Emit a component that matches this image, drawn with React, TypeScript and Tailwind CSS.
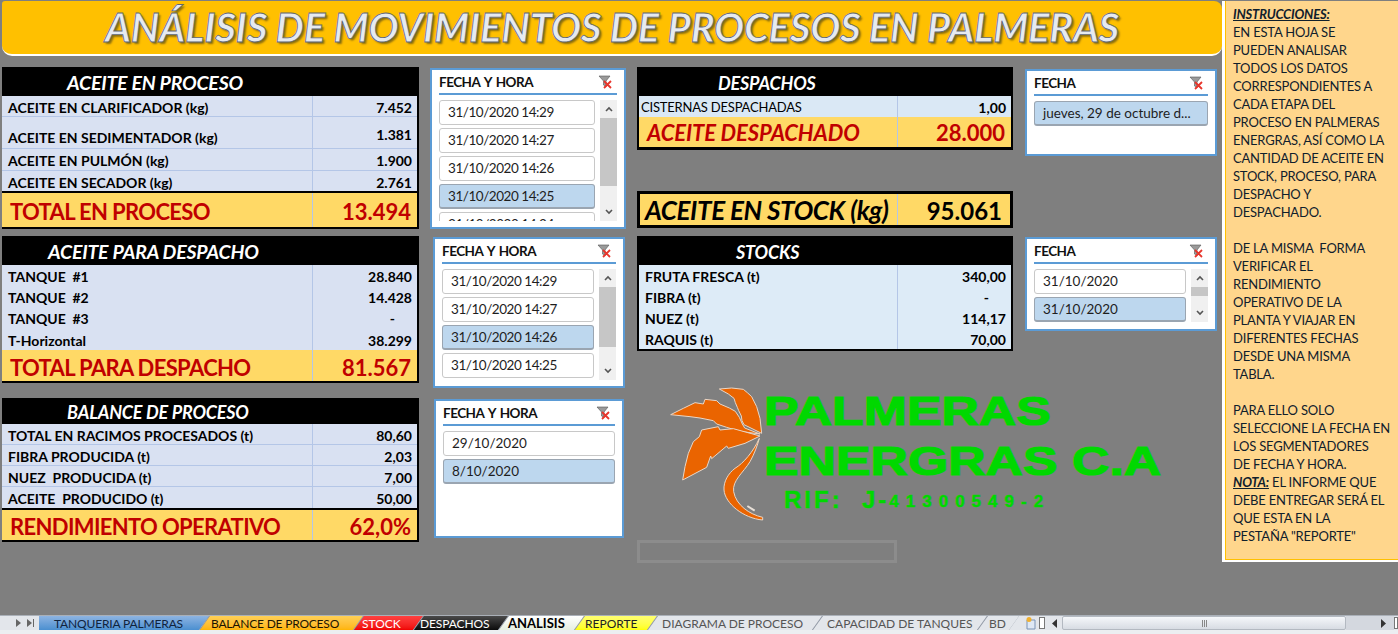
import type { ReactNode } from 'react';

const FONT = "font-['Lato','Liberation_Sans',sans-serif]";

type Row = { label: string; value: string; h: string; line?: boolean };

const proceso: Row[] = [
    { label: 'ACEITE EN CLARIFICADOR (kg)', value: '7.452', h: 'h-[21px]', line: true },
    { label: 'ACEITE EN SEDIMENTADOR (kg)', value: '1.381', h: 'h-[32px] items-end', line: true },
    { label: 'ACEITE EN PULMÓN (kg)', value: '1.900', h: 'h-[22px]', line: true },
    { label: 'ACEITE EN SECADOR (kg)', value: '2.761', h: 'h-[20px]' },
];
const despacho: Row[] = [
    { label: 'TANQUE  #1', value: '28.840', h: 'h-[21px]' },
    { label: 'TANQUE  #2', value: '14.428', h: 'h-[21px]' },
    { label: 'TANQUE  #3', value: '-     ', h: 'h-[21px]' },
    { label: 'T-Horizontal', value: '38.299', h: 'h-[22px]' },
];
const balance: Row[] = [
    { label: 'TOTAL EN RACIMOS PROCESADOS (t)', value: '80,60', h: 'h-[21px]', line: true },
    { label: 'FIBRA PRODUCIDA (t)', value: '2,03', h: 'h-[21px]', line: true },
    { label: 'NUEZ  PRODUCIDA (t)', value: '7,00', h: 'h-[21px]', line: true },
    { label: 'ACEITE  PRODUCIDO (t)', value: '50,00', h: 'h-[21px]' },
];
const stocks: Row[] = [
    { label: 'FRUTA FRESCA (t)', value: '340,00', h: 'h-[21px]' },
    { label: 'FIBRA (t)', value: '-     ', h: 'h-[21px]' },
    { label: 'NUEZ (t)', value: '114,17', h: 'h-[21px]' },
    { label: 'RAQUIS (t)', value: '70,00', h: 'h-[21px]' },
];

function DataRow({ row, divider, fill }: { row: Row; divider: string; fill: string }) {
    const tall = row.h.includes('items-end');
    return (
        <div className={`flex ${row.h} ${fill} ${row.line ? 'border-b border-[#b4c6e7]' : ''}`}>
            <div className={`flex-1 flex items-center pl-[6px] text-[14px] font-bold text-black whitespace-pre ${tall ? 'self-end h-[22px]' : 'pt-[2px]'}`}>
                {row.label}
            </div>
            <div className={`${divider} self-stretch border-l border-[#b4c6e7] flex ${tall ? 'items-end pb-[3px]' : 'items-center pt-[2px]'} justify-end pr-[5px] text-[14px] font-bold text-black whitespace-pre`}>
                {row.value}
            </div>
        </div>
    );
}

function TotalRow({ label, value, h, italic }: { label: string; value: string; h: string; italic?: boolean }) {
    return (
        <div className={`flex ${h} bg-[#ffd966]`}>
            <div className={`flex-1 flex items-center font-bold text-[#c00000] whitespace-nowrap ${italic ? 'pl-[8px] pt-px italic text-[22px] tracking-[-0.1px]' : 'pl-[8px] pt-[3px] text-[22px] tracking-[-0.65px]'}`}>
                {label}
            </div>
            <div className={`${italic ? 'w-[114px] pt-px' : 'w-[105px] pt-[3px]'} border-l border-[#b4c6e7] flex items-center justify-end pr-[6px] text-[22px] font-bold text-[#c00000]`}>
                {value}
            </div>
        </div>
    );
}

function Header({ title, h, pad, size }: { title: string; h: string; pad: string; size: string }) {
    return (
        <div className={`${h} ${pad} ${size} bg-black flex items-center font-bold italic text-white tracking-[-0.2px]`}>
            {title}
        </div>
    );
}

function ClearFilter() {
    return (
        <svg width="16" height="15" viewBox="0 0 16 15" className="shrink-0 mr-[3px]">
            <path d="M1 1h11L8 6v6L5.5 10V6z" fill="#9a9a9a" stroke="#555" strokeWidth="0.6" />
            <path d="M6 6l7 7M13 6l-7 7" stroke="#e8352b" strokeWidth="1.8" />
        </svg>
    );
}

function Scrollbar({ track, thumb }: { track: string; thumb: string }) {
    return (
        <div className={`w-[17px] ${track} bg-[#f0f0f0] flex flex-col items-center shrink-0 overflow-hidden`}>
            <svg width="10" height="18" viewBox="0 0 10 18" className="shrink-0">
                <path d="M2 11l3-3 3 3" fill="none" stroke="#555" strokeWidth="1.6" />
            </svg>
            <div className={`w-full ${thumb} bg-[#c6c6c6] shrink-0`} />
            <div className="flex-1" />
            <svg width="10" height="18" viewBox="0 0 10 18" className="shrink-0">
                <path d="M2 7l3 3 3-3" fill="none" stroke="#555" strokeWidth="1.6" />
            </svg>
        </div>
    );
}

function Item({ text, selected, tight }: { text: string; selected?: boolean; tight?: boolean }) {
    return (
        <div
            className={`h-[25px] shrink-0 rounded-[3px] flex items-center pl-[8px] text-[13.5px] text-[#1e1e1e] whitespace-nowrap overflow-hidden ${
                tight ? 'tracking-[-0.45px]' : ''
            } ${selected ? 'bg-[#bdd7ee] border border-[#9aa5b1] border-b-2' : 'bg-white border border-[#c8c8c8]'}`}
        >
            {text}
        </div>
    );
}

function Slicer({ title, box, inner, children }: { title: string; box: string; inner: string; children: ReactNode }) {
    return (
        <div className={`${box} bg-white border-2 border-[#5b9bd5] shrink-0 flex flex-col overflow-hidden`}>
            <div className={`${inner} h-[24px] mt-px flex items-center justify-between border-b-2 border-[#5b9bd5] shrink-0`}>
                <span className="text-[13.5px] font-bold text-[#111] tracking-[-0.5px] [word-spacing:1.5px]">{title}</span>
                <ClearFilter />
            </div>
            {children}
        </div>
    );
}

const tabs = [
    { label: 'TANQUERIA PALMERAS', w: 'w-[170px]', bg: 'bg-gradient-to-b from-[#8db4e2] to-[#4a8fd0]', text: 'text-[#10243e] text-[12px] tracking-[-0.15px]', pad: 'pl-[15px]' },
    { label: 'BALANCE DE PROCESO', w: 'w-[164px]', bg: 'bg-gradient-to-b from-[#ffd055] to-[#ffb400]', text: 'text-[#1c1400] text-[12px] tracking-[-0.2px]', pad: 'pl-[11px]' },
    { label: 'STOCK', w: 'w-[70px]', bg: 'bg-gradient-to-b from-[#ff4040] to-[#f00000]', text: 'text-white text-[12px]', pad: 'pl-[8px]' },
    { label: 'DESPACHOS', w: 'w-[95px]', bg: 'bg-gradient-to-b from-[#4a4a4a] to-[#0c0c0c]', text: 'text-white text-[12px] tracking-[-0.1px]', pad: 'pl-[6px]' },
    { label: 'ANALISIS', w: 'w-[86px]', bg: 'bg-gradient-to-b from-white to-[#e6f0e0]', text: 'text-black font-bold text-[13px]', pad: 'pl-[9px]' },
    { label: 'REPORTE', w: 'w-[83px]', bg: 'bg-gradient-to-b from-[#ffff70] to-[#ffff00]', text: 'text-[#222] text-[12px]', pad: 'pl-[10px]' },
    { label: 'DIAGRAMA DE PROCESO', w: 'w-[175px]', bg: 'bg-[#e3e6eb]', text: 'text-[#555] text-[12px]', pad: 'pl-[14px]' },
    { label: 'CAPACIDAD DE TANQUES', w: 'w-[175px]', bg: 'bg-[#e3e6eb]', text: 'text-[#555] text-[12px]', pad: 'pl-[14px]' },
    { label: 'BD', w: 'w-[42px]', bg: 'bg-[#e3e6eb]', text: 'text-[#555] text-[12px]', pad: 'pl-[11px]' },
];

function PalmLogo() {
    return (
        <svg width="104" height="144" viewBox="0 0 312 432" className="shrink-0">
            <g fill="#ea6400" stroke="#e9d6c6" strokeWidth="3" strokeLinejoin="round">
                <path d="M178 27L215 24L250 28L262 38L275 50L290 80L300 115L305 160L252 134L246 122L244 108L236 92L232 82L226 68L222 55L205 42Z" />
                <path d="M32 104L70 85L105 68L130 72L135 58L170 62L180 72L208 84L226 94L238 112L247 132L254 144L300 162L240 154L200 142L170 132L160 122L120 114L90 110Z" />
                <path d="M68 300L75 260L85 220L100 185L118 170L125 150L175 140L180 150L220 146L300 168L255 190L205 205L200 198L155 236L152 228L140 262Z" />
                <path d="M298 175C280 215 250 250 225 265C205 280 190 305 192 330C195 370 250 415 308 420V412C268 403 228 375 221 335C216 302 250 278 270 245C283 222 292 197 298 175Z" />
            </g>
            <path d="M262 378L284 392" stroke="#e8e0d8" strokeWidth="6" />
        </svg>
    );
}

function Logo() {
    const big = "font-['Liberation_Sans',sans-serif] font-bold text-[#00d800] [-webkit-text-stroke:1.2px_#00d800] origin-left scale-x-[1.295] whitespace-pre";
    return (
        <div className="flex ml-[23px] mt-[29px] h-[144px]">
            <PalmLogo />
            <div className="flex flex-col pt-[8px]">
                <div className={`${big} text-[40px] leading-[46px]`}>PALMERAS</div>
                <div className={`${big} text-[40px] leading-[46px] mt-[4px]`}>ENERGRAS C.A</div>
                <div className="mt-[2px] ml-[20px] h-[28px] flex items-end font-['Liberation_Sans',sans-serif] font-bold text-[#00d800] whitespace-pre [-webkit-text-stroke:0.5px_#00d800]">
                    <span className="text-[24px] leading-[28px] tracking-[3px]">RIF:  J-</span>
                    <span className="text-[17px] leading-[24px] tracking-[7px]">41300549-2</span>
                </div>
            </div>
        </div>
    );
}

function Instructions() {
    const lines = [
        'EN ESTA HOJA SE', 'PUEDEN ANALISAR', 'TODOS LOS DATOS', 'CORRESPONDIENTES A', 'CADA ETAPA DEL', 'PROCESO EN PALMERAS',
        'ENERGRAS, ASÍ COMO LA', 'CANTIDAD DE ACEITE EN', 'STOCK, PROCESO, PARA', 'DESPACHO Y', 'DESPACHADO.', '\u00a0',
        'DE LA MISMA  FORMA', 'VERIFICAR EL', 'RENDIMIENTO', 'OPERATIVO DE LA', 'PLANTA Y VIAJAR EN', 'DIFERENTES FECHAS',
        'DESDE UNA MISMA', 'TABLA.', '\u00a0', 'PARA ELLO SOLO', 'SELECCIONE LA FECHA EN', 'LOS SEGMENTADORES', 'DE FECHA Y HORA.',
    ];
    const tail = ['DEBE ENTREGAR SERÁ EL', 'QUE ESTA EN LA', 'PESTAÑA "REPORTE"'];
    return (
        <div className="w-[176px] h-[561px] shrink-0 mt-px bg-[#ffd68c] border-l-[3px] border-b-2 border-white pl-[8px] pt-[4px] text-[13px] leading-[18px] text-[#10202c] whitespace-pre tracking-[-0.2px] shadow-[inset_1px_0_0_#ffc000,inset_0_-1px_0_#ffc000]">
            <div className="font-bold italic underline">INSTRUCCIONES:</div>
            {lines.map((l, i) => (
                <div key={i}>{l}</div>
            ))}
            <div>
                <span className="font-bold italic underline">NOTA:</span> EL INFORME QUE
            </div>
            {tail.map((l) => (
                <div key={l}>{l}</div>
            ))}
        </div>
    );
}

function TabBar() {
    return (
        <div className={`h-[19px] shrink-0 flex flex-col ${FONT} bg-[#e3e6eb]`}>
            <div className="h-[15px] flex items-stretch border-t border-[#aab0b8] shrink-0">
                <div className="w-[39px] flex items-center justify-end gap-[6px] pr-[5px] shrink-0">
                    <svg width="5" height="8" viewBox="0 0 5 8"><path d="M0 0l5 4-5 4z" fill="#666" /></svg>
                    <svg width="7" height="8" viewBox="0 0 7 8"><path d="M0 0l5 4-5 4zM6 0h1v8H6z" fill="#666" /></svg>
                </div>
                <div className="flex w-[1000px] shrink-0 overflow-hidden">
                    {tabs.map((t, i) => (
                        <div
                            key={t.label}
                            className={`${t.w} shrink-0 ${i > 0 ? '-ml-[10px] [clip-path:polygon(10px_0,100%_0,calc(100%-10px)_100%,0_100%)]' : '[clip-path:polygon(0_0,100%_0,calc(100%-10px)_100%,0_100%)]'} bg-[#8d95a1]`}
                        >
                            <div
                                className={`h-full w-full pt-px ${i > 0 ? 'ml-px [clip-path:polygon(10px_0,100%_0,calc(100%-10px)_100%,0_100%)]' : '[clip-path:polygon(0_0,100%_0,calc(100%-10px)_100%,0_100%)]'} ${t.bg} ${t.pad} ${t.text} flex items-center whitespace-nowrap`}
                            >
                                {t.label}
                            </div>
                        </div>
                    ))}
                    <svg width="14" height="14" viewBox="0 0 14 14" className="shrink-0 ml-[5px]">
                        <path d="M3 4h8v9H3z" fill="#dfe8f4" stroke="#7b93b5" />
                        <circle cx="5" cy="3.5" r="2.5" fill="#f0b030" />
                    </svg>
                </div>
                <div className="w-[6px] my-[1px] mr-[2px] bg-white border border-[#777] shrink-0" />
                <div className="w-[15px] flex items-center justify-center shrink-0">
                    <svg width="5" height="9" viewBox="0 0 5 9"><path d="M5 0L0 4.5 5 9z" fill="#333" /></svg>
                </div>
                <div className="w-[284px] flex items-center justify-center gap-px rounded-[2px] bg-gradient-to-b from-[#f5f7fa] to-[#d7dce3] border border-[#b3b9c1] shrink-0">
                    <span className="w-px h-[7px] bg-[#888]" />
                    <span className="w-px h-[7px] bg-[#888]" />
                    <span className="w-px h-[7px] bg-[#888]" />
                </div>
                <div className="flex-1 flex items-center justify-end pr-[8px] bg-[#d4d8df]">
                    <svg width="5" height="9" viewBox="0 0 5 9"><path d="M0 0l5 4.5L0 9z" fill="#333" /></svg>
                </div>
                <div className="w-[4px] my-[1px] bg-white border border-[#777] shrink-0" />
            </div>
            <div className="flex-1 bg-[#eceef1]" />
        </div>
    );
}

export default function App() {
    return (
        <div className={`w-[1398px] h-[634px] overflow-hidden flex flex-col bg-[#7f7f7f] ${FONT}`}>
            <div className="flex-1 flex items-start min-h-0">
                <div className="w-[1222px] shrink-0">
                    {/* banner */}
                    <div className="h-[55px] mt-px ml-[2px] w-[1220px] rounded-b-[10px] rounded-tr-[8px] rounded-tl-[3px] bg-[#ffc000] border-b-2 border-white flex items-center justify-center pb-[2px]">
                        <span className="text-[40px] font-bold italic text-[#e6eaf0] tracking-[-0.22px] whitespace-nowrap [-webkit-text-stroke:0.8px_#5f6775] [text-shadow:2px_2px_2px_#8a6d10]">
                            ANÁLISIS DE MOVIMIENTOS DE PROCESOS EN PALMERAS
                        </span>
                    </div>

                    <div className="flex pl-[2px] pt-[11px]">
                        {/* first tables */}
                        <div className="w-[417px] shrink-0 flex flex-col">
                            <div className="border-r-2 border-b-2 border-black">
                                <Header title="ACEITE EN PROCESO" h="h-[29px] pt-[3px]" pad="pl-[65px]" size="text-[19.5px]" />
                                {proceso.map((r) => (
                                    <DataRow key={r.label} row={r} divider="w-[105px]" fill="bg-[#d9e1f2]" />
                                ))}
                                <div className="h-[2px] bg-black" />
                                <TotalRow label="TOTAL EN PROCESO" value="13.494" h="h-[34px]" />
                            </div>
                            <div className="mt-[7px] border-r-2 border-b-2 border-black">
                                <Header title="ACEITE PARA DESPACHO" h="h-[29px] pt-[2px]" pad="pl-[46px]" size="text-[19.5px]" />
                                {despacho.map((r) => (
                                    <DataRow key={r.label} row={r} divider="w-[105px]" fill="bg-[#d9e1f2]" />
                                ))}
                                <TotalRow label="TOTAL PARA DESPACHO" value="81.567" h="h-[31px]" />
                            </div>
                            <div className="mt-[15px] border-r-2 border-b-2 border-black">
                                <Header title="BALANCE DE PROCESO" h="h-[26px] pt-[3px]" pad="pl-[65px]" size="text-[18px]" />
                                {balance.map((r) => (
                                    <DataRow key={r.label} row={r} divider="w-[105px]" fill="bg-[#d9e1f2]" />
                                ))}
                                <div className="h-[2px] bg-black" />
                                <TotalRow label="RENDIMIENTO OPERATIVO" value="62,0%" h="h-[30px]" />
                            </div>
                        </div>

                        {/* first slicers */}
                        <div className="w-[207px] shrink-0 flex flex-col pl-[11px]">
                            <Slicer title="FECHA Y HORA" box="w-[196px] h-[161px] mt-px" inner="mx-[7px]">
                                <div className="flex gap-[5px] mx-[7px] mt-[5px] h-[121px] overflow-hidden">
                                    <div className="w-[156px] flex flex-col gap-[3px] shrink-0">
                                        <Item tight text="31/10/2020 14:29" />
                                        <Item tight text="31/10/2020 14:27" />
                                        <Item tight text="31/10/2020 14:26" />
                                        <Item tight text="31/10/2020 14:25" selected />
                                        <Item tight text="31/10/2020 14:24" />
                                    </div>
                                    <Scrollbar track="h-[121px]" thumb="h-[68px]" />
                                </div>
                            </Slicer>
                            <Slicer title="FECHA Y HORA" box="w-[192px] h-[151px] mt-[8px] ml-[3px]" inner="mx-[7px]">
                                <div className="flex gap-[5px] mx-[7px] mt-[5px] h-[111px] overflow-hidden">
                                    <div className="w-[152px] flex flex-col gap-[3px] shrink-0">
                                        <Item tight text="31/10/2020 14:29" />
                                        <Item tight text="31/10/2020 14:27" />
                                        <Item tight text="31/10/2020 14:26" selected />
                                        <Item tight text="31/10/2020 14:25" />
                                    </div>
                                    <Scrollbar track="h-[111px]" thumb="h-[60px]" />
                                </div>
                            </Slicer>
                            <Slicer title="FECHA Y HORA" box="w-[190px] h-[139px] mt-[11px] ml-[4px]" inner="mx-[7px]">
                                <div className="flex flex-col gap-[3px] mx-[7px] mt-[5px]">
                                    <Item text="29/10/2020" />
                                    <Item text="8/10/2020" selected />
                                </div>
                            </Slicer>
                        </div>

                        {/* right block */}
                        <div className="w-[594px] shrink-0 flex flex-col pl-[11px]">
                            <div className="flex">
                                <div className="w-[376px] shrink-0 flex flex-col">
                                    <div className="border-2 border-t-0 border-black border-b-[3px]">
                                        <div className="-mx-[2px]">
                                            <Header title="DESPACHOS" h="h-[29px] pt-[4px]" pad="pl-[81px]" size="text-[18px]" />
                                        </div>
                                        <div className="flex h-[21px] bg-[#dae8f5]">
                                            <div className="flex-1 flex items-center pt-[2px] pl-[2px] text-[13px] text-black tracking-[-0.2px]">CISTERNAS DESPACHADAS</div>
                                            <div className="w-[114px] border-l border-[#b4c6e7] flex items-center justify-end pt-[2px] pr-[5px] text-[14px] font-bold text-black">1,00</div>
                                        </div>
                                        <TotalRow label="ACEITE DESPACHADO" value="28.000" h="h-[30px]" italic />
                                    </div>
                                    <div className="mt-[41px] h-[37px] border-[3px] border-black bg-[#ffd966] flex">
                                        <div className="flex-1 flex items-center pl-[5px] pt-[2px] text-[26px] font-bold italic text-black tracking-[-0.4px] whitespace-nowrap">ACEITE EN STOCK (kg)</div>
                                        <div className="w-[113px] border-l border-[#b4c6e7] flex items-center justify-end pr-[8px] pt-[2px] text-[24px] font-bold text-black">95.061</div>
                                    </div>
                                    <div className="mt-[8px] border-2 border-t-0 border-black">
                                        <div className="-mx-[2px]">
                                            <Header title="STOCKS" h="h-[29px] pt-[4px]" pad="pl-[99px]" size="text-[18px]" />
                                        </div>
                                        <div className="bg-[#ddebf7]">
                                            {stocks.map((r) => (
                                                <DataRow key={r.label} row={r} divider="w-[114px]" fill="bg-[#ddebf7]" />
                                            ))}
                                        </div>
                                    </div>
                                </div>
                                <div className="flex flex-col pl-[12px]">
                                    <Slicer title="FECHA" box="w-[192px] h-[87px] mt-[2px]" inner="mx-[7px]">
                                        <div className="mx-[7px] mt-[5px]">
                                            <Item text="jueves, 29 de octubre d..." selected />
                                        </div>
                                    </Slicer>
                                    <Slicer title="FECHA" box="w-[192px] h-[94px] mt-[81px]" inner="mx-[7px]">
                                        <div className="flex gap-[5px] mx-[7px] mt-[5px]">
                                            <div className="w-[152px] flex flex-col gap-[3px] shrink-0">
                                                <Item text="31/10/2020" />
                                                <Item text="31/10/2020" selected />
                                            </div>
                                            <Scrollbar track="h-[53px]" thumb="h-[9px]" />
                                        </div>
                                    </Slicer>
                                </div>
                            </div>
                            <Logo />
                            <div className="mt-[16px] w-[260px] h-[23px] border-[3px] border-[#8c8c8c]" />
                        </div>
                    </div>
                </div>
                <Instructions />
            </div>
            <TabBar />
        </div>
    );
}
